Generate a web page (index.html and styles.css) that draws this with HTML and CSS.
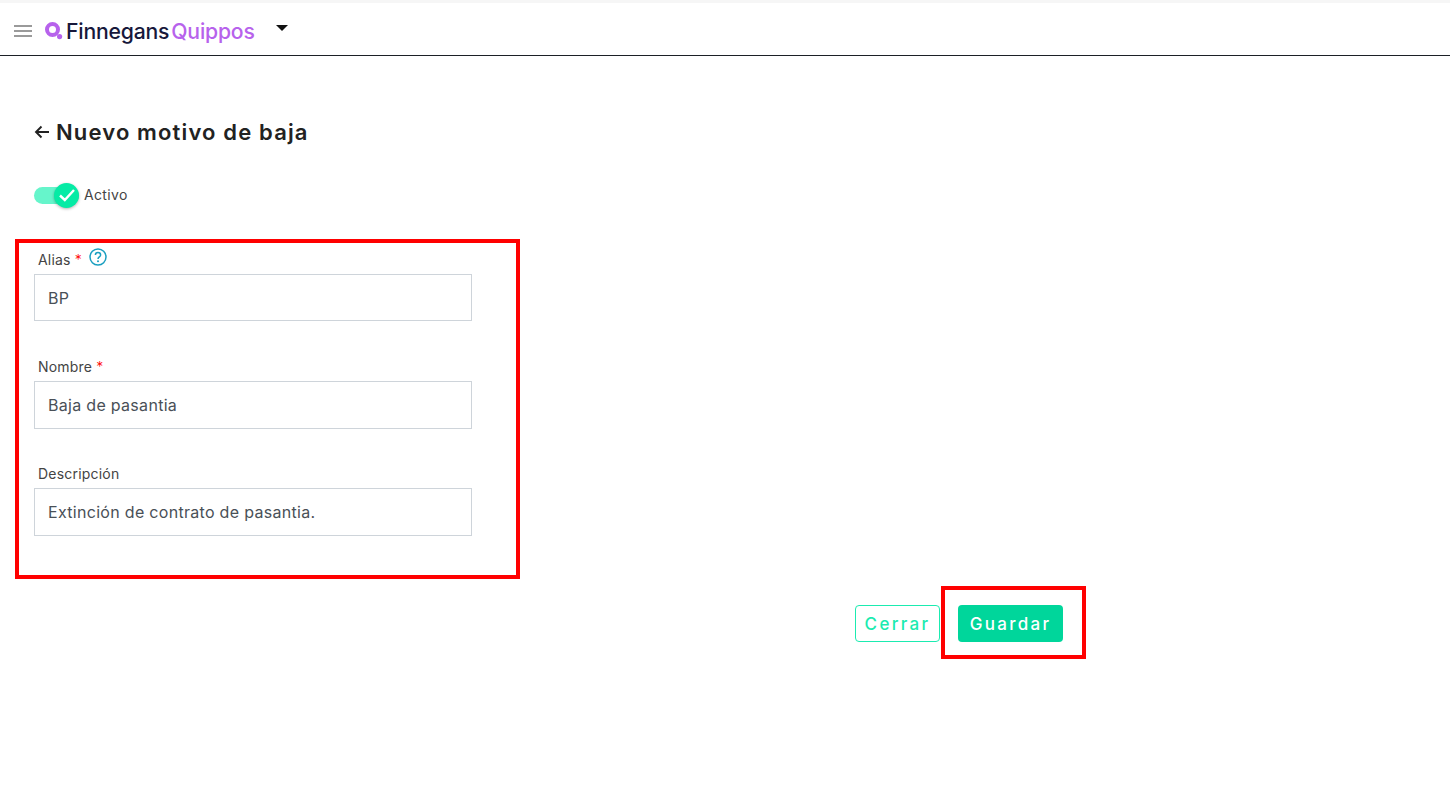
FILE: index.html
```html
<!DOCTYPE html>
<html lang="en">
<head>
  <meta charset="UTF-8">
  <title>Nuevo motivo de baja</title>
  <link rel="stylesheet" href="styles.css">
</head>
<body>

  <header class="topbar">
    <svg class="menu-icon" width="20" height="14" viewBox="0 0 20 14">
      <path d="M1 2h18M1 7h18M1 12h18" stroke="#9a9a9a" stroke-width="2" fill="none"/>
    </svg>
    <svg class="logo-mark" width="18" height="18" viewBox="0 0 18 18">
      <circle cx="7.500" cy="7.500" r="5.500" fill="none" stroke="#b762ec" stroke-width="4"/>
      <circle cx="14.600" cy="14.600" r="2.600" fill="#b762ec"/>
    </svg>
    <span class="logo-text">Finnegans</span>
    <span class="logo-product">Quippos</span>
    <span class="caret"></span>
  </header>

  <main class="content">
    <h1 class="page-title">
      <svg width="16" height="14" viewBox="0 0 16 14">
        <path d="M15 7H2M7.500 1.500 2 7l5.500 5.500" stroke="#222" stroke-width="1.900" fill="none"/>
      </svg>
      Nuevo motivo de baja
    </h1>

    <div class="status">
      <span class="switch">
        <span class="switch-knob">
          <svg width="18" height="14" viewBox="0 0 18 14">
            <path d="M2 7.500 6.800 12 16 2" stroke="#fff" stroke-width="2.400" fill="none"/>
          </svg>
        </span>
      </span>
      <span class="status-label">Activo</span>
    </div>

    <form class="form">
      <div class="field field-first">
        <label>Alias <em>*</em>
          <svg class="help" width="18" height="18" viewBox="0 0 18 18">
            <circle cx="9" cy="9" r="8" fill="none" stroke="#1a9fc0" stroke-width="1.500"/>
            <path d="M6.400 7c0-1.500 1.100-2.500 2.600-2.500S11.600 5.500 11.600 6.900c0 1.900-2.600 2-2.600 4" fill="none" stroke="#1a9fc0" stroke-width="1.500"/>
            <circle cx="9" cy="13.200" r="1" fill="#1a9fc0"/>
          </svg>
        </label>
        <input class="input" type="text" value="BP">
      </div>
      <div class="field">
        <label>Nombre <em>*</em></label>
        <input class="input" type="text" value="Baja de pasantia">
      </div>
      <div class="field">
        <label>Descripción</label>
        <input class="input" type="text" value="Extinción de contrato de pasantia.">
      </div>
    </form>

    <div class="actions">
      <button class="btn btn-outline" type="button">Cerrar</button>
      <button class="btn btn-primary" type="button">Guardar</button>
    </div>
  </main>

  <!-- red highlight boxes drawn over the page -->
  <div class="mark mark-form"></div>
  <div class="mark mark-save"></div>

</body>
</html>
```

FILE: styles.css
```css
* {
  box-sizing: border-box;
}

body {
  margin: 0;
  height: 803px;
  overflow: hidden;
  position: relative;
  background-color: white;
  font-family: Inter, "Open Sans", sans-serif;
  color: #333;
}

.topbar {
  height: 56px;
  display: flex;
  align-items: center;
  padding: 3px 0 0 13px;
  border-top: 3px solid #f6f6f6;
  border-bottom: 1px solid #1c2026;
  background-color: white;
}

.menu-icon {
  margin-right: 12px;
}

.logo-mark {
  margin-right: 3px;
}

.logo-text,
.logo-product {
  font-family: Inter, sans-serif;
  font-size: 21.2px;
  font-weight: 500;
  letter-spacing: -0.2px;
}

.logo-text {
  color: #17183b;
  margin-right: 2px;
}

.logo-product {
  color: #b762ec;
}

.caret {
  width: 0;
  height: 0;
  margin: -5px 0 0 21px;
  border-left: 6px solid transparent;
  border-right: 6px solid transparent;
  border-top: 6px solid #111;
}

.content {
  padding: 62px 0 0 34px;
}

.page-title {
  display: flex;
  align-items: center;
  gap: 6px;
  margin: 0;
  height: 28px;
  font-size: 22px;
  font-weight: 600;
  letter-spacing: 1.15px;
  color: #222;
}

.status {
  display: flex;
  align-items: center;
  gap: 5px;
  height: 28px;
  margin-top: 35px;
  font-size: 14px;
  letter-spacing: 0.35px;
  color: #444;
}

.status-label {
  margin-top: -2px;
}

.switch {
  position: relative;
  display: block;
  width: 45px;
  height: 17px;
  border-radius: 9px;
  background-color: #66f5cb;
}

.switch-knob {
  position: absolute;
  right: 0;
  top: -4px;
  width: 25px;
  height: 25px;
  display: flex;
  align-items: center;
  justify-content: center;
  border-radius: 50%;
  background-color: #05eba5;
  box-shadow: 0 1px 3px rgba(0, 0, 0, 0.3);
}

.form {
  margin-top: 37px;
  width: 438px;
}

.field {
  margin-bottom: 31px;
}

.field label {
  display: flex;
  align-items: center;
  gap: 4px;
  height: 28px;
  padding: 0 0 2px 4px;
  font-size: 14px;
  letter-spacing: 0.2px;
  color: #444;
}

.field em {
  font-style: normal;
  font-weight: 300;
  color: #f00;
}

.help {
  margin-left: 3px;
  margin-top: -4px;
}

.input {
  display: block;
  width: 100%;
  height: 48px;
  padding: 0 13px;
  border: 1px solid #ced4da;
  font-family: inherit;
  font-size: 16px;
  letter-spacing: 0.3px;
  color: #495057;
  background-color: white;
}

.field-first {
  margin-bottom: 32px;
}

.field-first .input {
  height: 47px;
}

.actions {
  display: flex;
  justify-content: flex-end;
  gap: 18px;
  width: 1029px;
  margin-top: 69px;
}

.btn {
  height: 37px;
  padding: 0;
  border-radius: 4px;
  font-family: inherit;
  font-size: 17px;
  font-weight: 500;
  letter-spacing: 2.3px;
}

.btn-outline {
  width: 85px;
  border: 1px solid #1bebb0;
  background-color: white;
  color: #1bebb0;
}

.btn-primary {
  width: 105px;
  border: none;
  background-color: #00d69b;
  color: white;
}

.mark {
  position: absolute;
  border: 4px solid #f00;
}

.mark-form {
  left: 15px;
  top: 239px;
  width: 505px;
  height: 340px;
}

.mark-save {
  left: 941px;
  top: 586px;
  width: 145px;
  height: 73px;
}
```
